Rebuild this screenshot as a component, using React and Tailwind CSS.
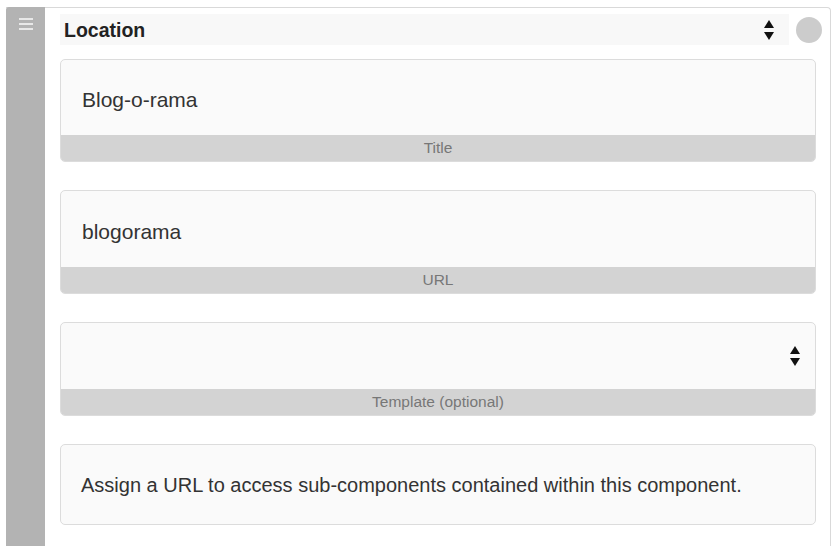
function SortArrows() {
  return (
    <svg width="12" height="22" viewBox="0 0 12 22" className="text-[#111]">
      <path d="M6 1 L11 9 L1 9 Z" fill="currentColor" />
      <path d="M6 21 L11 13 L1 13 Z" fill="currentColor" />
    </svg>
  );
}

function Field({ value, label, select = false, inputH = "h-[76px]" }) {
  return (
    <div className="rounded-[5px] border border-[#dcdcdc] bg-[#fafafa] overflow-hidden">
      <div className={`${inputH} flex items-center pl-[21px] pr-[14px] text-[21px] text-[#333]`}>
        <span className="flex-1 pt-[5px]">{value}</span>
        {select && <SortArrows />}
      </div>
      <div className="h-[26px] bg-[#d3d3d3] flex items-center justify-center text-[15.5px] text-[#777]">
        {label}
      </div>
    </div>
  );
}

export default function App() {
  return (
    <div
      className="w-[839px] h-[546px] bg-white pl-[6px] pt-[7px] overflow-hidden"
      style={{ fontFamily: '"Liberation Sans", Arial, sans-serif' }}
    >
      <div className="flex h-full w-[825px] border-t border-r border-[#d9d9d9] rounded-tr-[4px]">
        <div className="w-[39px] bg-[#b3b3b3] rounded-tl-[3px] flex justify-center pt-[11px] -mt-px">
          <div className="flex flex-col gap-[3px] w-[14px]">
            <div className="h-[2px] bg-[#e8e8e8]" />
            <div className="h-[2px] bg-[#e8e8e8]" />
            <div className="h-[2px] bg-[#e8e8e8]" />
          </div>
        </div>
        <div className="flex-1 pl-[15px] pr-[8px]">
          <div className="flex items-center mt-[6px]">
            <div className="flex-1 h-[31px] bg-[#f8f8f8] flex items-center pl-[4px] pr-[14px]">
              <span className="flex-1 text-[19.5px] font-bold text-[#222] pt-[2px]">Location</span>
              <SortArrows />
            </div>
            <div className="ml-[7px] w-[26px] h-[26px] rounded-full bg-[#cccccc]" />
          </div>
          <div className="mr-[6px] mt-[14px] flex flex-col gap-[28px]">
            <Field value="Blog-o-rama" label="Title" inputH="h-[75px]" />
            <Field value="blogorama" label="URL" />
            <Field value="" label="Template (optional)" select inputH="h-[66px]" />
            <div className="h-[81px] rounded-[5px] border border-[#dcdcdc] bg-[#fafafa] flex items-center pl-[20px] text-[20px] text-[#333]">
              Assign a URL to access sub-components contained within this component.
            </div>
          </div>
        </div>
      </div>
    </div>
  );
}
